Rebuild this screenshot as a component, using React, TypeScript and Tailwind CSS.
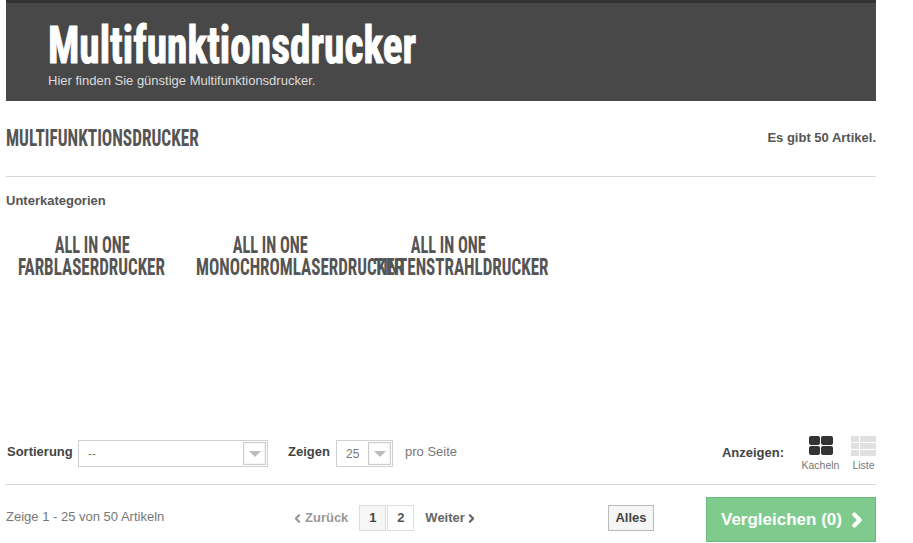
import React from 'react';
import { ChevronLeft, ChevronRight } from 'lucide-react';

const headFont = "[font-family:'Roboto_Condensed','Liberation_Sans',sans-serif]";

const subcategories = ['FARBLASERDRUCKER', 'MONOCHROMLASERDRUCKER', 'TINTENSTRAHLDRUCKER'];

const SelectBox: React.FC<{ value: string; className: string }> = ({ value, className }) => (
  <div className={`h-[27px] flex items-center justify-between border border-[#d0d0d0] pl-[9px] pr-[1px] bg-white text-xs text-[#777] ${className}`}>
    <span>{value}</span>
    <span className="w-[23px] h-[23px] border border-[#ccc] shadow-[inset_0_0_2px_#ddd] flex items-center justify-center">
      <span className="w-0 h-0 border-x-[6px] border-x-transparent border-t-[6px] border-t-[#bbb]" />
    </span>
  </div>
);

const App: React.FC = () => {
  return (
    <div className="w-[913px] h-[543px] overflow-hidden bg-white pl-[6px] font-['Liberation_Sans',Arial,sans-serif] text-[#777]">
      <div className="w-[870px]">
        {/* Banner */}
        <div className="h-[101px] bg-[#484848] border-t-[3px] border-[#333] pl-[42px] pt-[17px]">
          <h1 className={`${headFont} text-[52px] leading-[52px] font-bold text-white inline-block whitespace-nowrap origin-left scale-x-[0.795] [-webkit-text-stroke:1px_white]`}>Multifunktionsdrucker</h1>
          <p className="text-[13px] leading-[14px] mt-[2px] text-[#ddd]">Hier finden Sie günstige Multifunktionsdrucker.</p>
        </div>

        {/* Titel */}
        <div className="h-[76px] border-b border-[#d6d6d6] flex justify-between pt-[25px]">
          <h2 className={`${headFont} text-[24px] leading-[24px] font-bold text-[#555] whitespace-nowrap origin-left scale-x-[0.72]`}>MULTIFUNKTIONSDRUCKER</h2>
          <span className="text-[13px] leading-4 font-bold text-[#555] mt-[4px]">Es gibt 50 Artikel.</span>
        </div>

        <h3 className="text-[13px] font-bold text-[#555] mt-[16px] leading-[16px]">Unterkategorien</h3>

        {/* Unterkategorien */}
        <div className="flex ml-[-3px] mt-[25px] h-[205px]">
          {subcategories.map(name => (
            <div key={name} className={`w-[178px] px-[15px] text-center ${headFont} text-[24px] leading-[22px] font-bold text-[#555]`}>
              <span className="inline-block scale-x-[0.68]">ALL IN ONE</span>
              <br />
              <span className="inline-block origin-left scale-x-[0.71]">{name}</span>
            </div>
          ))}
        </div>

        {/* Sortierung */}
        <div className="h-[46px] border-b border-[#d6d6d6] flex items-start">
          <div className="flex items-center mt-[1px] ml-[1px]">
            <span className="text-[13px] font-bold text-[#444] w-[71px] pb-[4px]">Sortierung</span>
            <SelectBox value="--" className="w-[190px]" />
            <span className="text-[13px] font-bold text-[#444] ml-[20px] w-[48px] pb-[4px]">Zeigen</span>
            <SelectBox value="25" className="w-[57px]" />
            <span className="text-[13px] ml-[12px] pb-[4px]">pro Seite</span>
          </div>
          <div className="ml-auto flex items-start">
            <span className="text-[13px] font-bold text-[#444] mt-[4px] mr-[17px]">Anzeigen:</span>
            <div className="flex flex-col items-center w-[39px] mr-[11px] mt-[-3px]">
              <div className="grid grid-cols-2 gap-[1px] w-[24px]">
                <span className="h-[9px] bg-[#333] rounded-[2px]" />
                <span className="h-[9px] bg-[#333] rounded-[2px]" />
                <span className="h-[9px] bg-[#333] rounded-[2px]" />
                <span className="h-[9px] bg-[#333] rounded-[2px]" />
              </div>
              <span className="text-[10.5px] leading-[12px] mt-[4px]">Kacheln</span>
            </div>
            <div className="flex flex-col items-center w-[25px] mt-[-3px]">
              <div className="grid grid-cols-[8px_16px] gap-[1px] w-[25px]">
                <span className="h-[6px] bg-[#e0e0e0]" /><span className="h-[6px] bg-[#e0e0e0]" />
                <span className="h-[6px] bg-[#e0e0e0]" /><span className="h-[6px] bg-[#e0e0e0]" />
                <span className="h-[6px] bg-[#e0e0e0]" /><span className="h-[6px] bg-[#e0e0e0]" />
              </div>
              <span className="text-[10.5px] leading-[12px] mt-[3px]">Liste</span>
            </div>
          </div>
        </div>

        {/* Pagination */}
        <div className="flex items-start">
          <span className="text-[13px] leading-4 mt-[24px] w-[285px]">Zeige 1 - 25 von 50 Artikeln</span>
          <div className="flex items-center mt-[20px] w-[317px] text-[13px] font-bold">
            <ChevronLeft size={13} strokeWidth={4} className="text-[#999] mr-[1px]" />
            <span className="text-[#999] mr-[11px]">Zurück</span>
            <span className="w-[27px] h-[26px] flex items-center justify-center border border-[#ddd] bg-[#f6f6f6] text-[#444]">1</span>
            <span className="w-[27px] h-[26px] flex items-center justify-center border border-[#ddd] text-[#555] ml-[1px]">2</span>
            <span className="text-[#666] ml-[11px]">Weiter</span>
            <ChevronRight size={13} strokeWidth={4} className="text-[#666]" />
          </div>
          <span className="mt-[20px] w-[46px] h-[26px] flex items-center justify-center border border-[#bbb] bg-[#f6f6f6] text-[13px] font-bold text-[#444]">Alles</span>
          <div className="ml-auto mt-[12px] w-[170px] h-[45px] bg-[#7fcb8e] border border-[#6bb97c] flex items-center pl-[14px] text-[17px] font-bold text-white">
            Vergleichen (0)
            <ChevronRight size={22} strokeWidth={4.5} className="ml-[4px]" />
          </div>
        </div>
      </div>
    </div>
  );
};

export default App;
